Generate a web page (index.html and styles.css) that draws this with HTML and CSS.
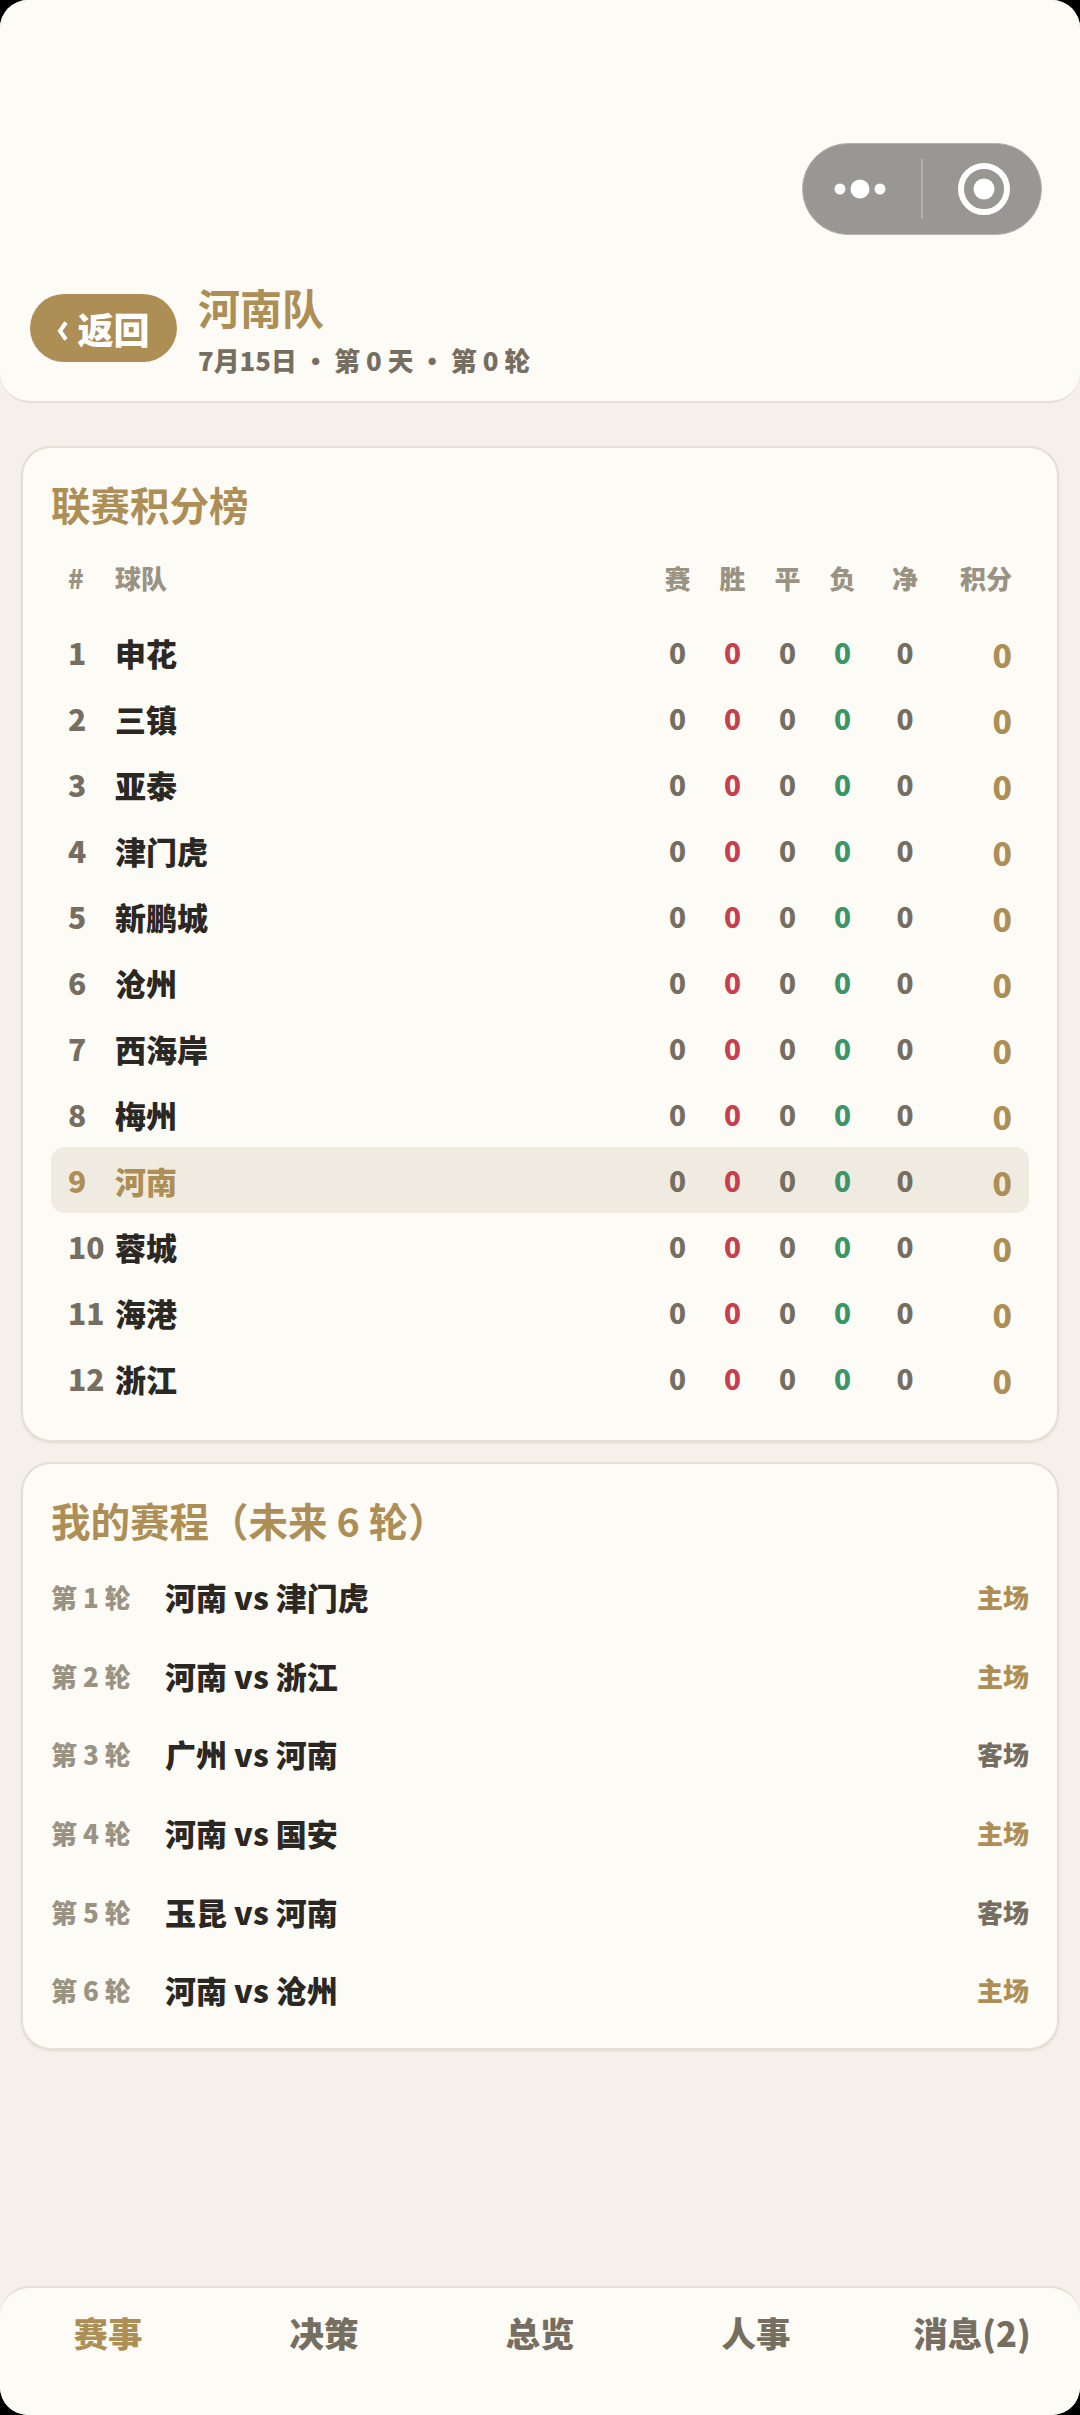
FILE: index.html
```html
<!DOCTYPE html>
<html lang="zh-CN">
<head>
    <meta charset="UTF-8">
    <title>河南队</title>
    <link rel="stylesheet" href="styles.css">
</head>
<body>
<div class="app">
    <header class="top">
        <div class="capsule">
            <div class="capsule-part left">
                <svg width="52" height="20" viewBox="0 0 52 20"><circle cx="6" cy="10" r="5.5" fill="#fff"/><circle cx="26" cy="10" r="9.5" fill="#fff"/><circle cx="46" cy="10" r="5.5" fill="#fff"/></svg>
            </div>
            <div class="capsule-line"></div>
            <div class="capsule-part right">
                <svg width="52" height="52" viewBox="0 0 52 52"><circle cx="26" cy="26" r="23" fill="none" stroke="#fff" stroke-width="6"/><circle cx="26" cy="26" r="10.5" fill="#fff"/></svg>
            </div>
        </div>
        <div class="top-row">
            <button class="back">
                <svg class="back-arrow" width="11" height="20" viewBox="0 0 11 20"><path d="M9 1.5 3 10l6 8.5" fill="none" stroke="#fff" stroke-width="4"/></svg>
                返回
            </button>
            <div>
                <h1>河南队</h1>
                <p class="sub">7月15日 ・ 第 0 天 ・ 第 0 轮</p>
            </div>
        </div>
    </header>

    <main>
        <section class="card">
            <h2>联赛积分榜</h2>
            <div class="row head">
                <span>#</span><span>球队</span><span class="c">赛</span><span class="c">胜</span><span class="c">平</span><span class="c">负</span><span class="c">净</span><span class="r">积分</span>
            </div>
            <div class="row"><span class="rank">1</span><span class="team">申花</span><span class="c">0</span><span class="c win">0</span><span class="c">0</span><span class="c lose">0</span><span class="c">0</span><span class="r pts">0</span></div>
            <div class="row"><span class="rank">2</span><span class="team">三镇</span><span class="c">0</span><span class="c win">0</span><span class="c">0</span><span class="c lose">0</span><span class="c">0</span><span class="r pts">0</span></div>
            <div class="row"><span class="rank">3</span><span class="team">亚泰</span><span class="c">0</span><span class="c win">0</span><span class="c">0</span><span class="c lose">0</span><span class="c">0</span><span class="r pts">0</span></div>
            <div class="row"><span class="rank">4</span><span class="team">津门虎</span><span class="c">0</span><span class="c win">0</span><span class="c">0</span><span class="c lose">0</span><span class="c">0</span><span class="r pts">0</span></div>
            <div class="row"><span class="rank">5</span><span class="team">新鹏城</span><span class="c">0</span><span class="c win">0</span><span class="c">0</span><span class="c lose">0</span><span class="c">0</span><span class="r pts">0</span></div>
            <div class="row"><span class="rank">6</span><span class="team">沧州</span><span class="c">0</span><span class="c win">0</span><span class="c">0</span><span class="c lose">0</span><span class="c">0</span><span class="r pts">0</span></div>
            <div class="row"><span class="rank">7</span><span class="team">西海岸</span><span class="c">0</span><span class="c win">0</span><span class="c">0</span><span class="c lose">0</span><span class="c">0</span><span class="r pts">0</span></div>
            <div class="row"><span class="rank">8</span><span class="team">梅州</span><span class="c">0</span><span class="c win">0</span><span class="c">0</span><span class="c lose">0</span><span class="c">0</span><span class="r pts">0</span></div>
            <div class="row mine"><span class="rank">9</span><span class="team">河南</span><span class="c">0</span><span class="c win">0</span><span class="c">0</span><span class="c lose">0</span><span class="c">0</span><span class="r pts">0</span></div>
            <div class="row"><span class="rank">10</span><span class="team">蓉城</span><span class="c">0</span><span class="c win">0</span><span class="c">0</span><span class="c lose">0</span><span class="c">0</span><span class="r pts">0</span></div>
            <div class="row"><span class="rank">11</span><span class="team">海港</span><span class="c">0</span><span class="c win">0</span><span class="c">0</span><span class="c lose">0</span><span class="c">0</span><span class="r pts">0</span></div>
            <div class="row"><span class="rank">12</span><span class="team">浙江</span><span class="c">0</span><span class="c win">0</span><span class="c">0</span><span class="c lose">0</span><span class="c">0</span><span class="r pts">0</span></div>
        </section>

        <section class="card card-schedule">
            <h2>我的赛程（未来 6 轮）</h2>
            <div class="game"><span class="round">第 1 轮</span><span class="match">河南 vs 津门虎</span><span class="home">主场</span></div>
            <div class="game"><span class="round">第 2 轮</span><span class="match">河南 vs 浙江</span><span class="home">主场</span></div>
            <div class="game"><span class="round">第 3 轮</span><span class="match">广州 vs 河南</span><span class="away">客场</span></div>
            <div class="game"><span class="round">第 4 轮</span><span class="match">河南 vs 国安</span><span class="home">主场</span></div>
            <div class="game"><span class="round">第 5 轮</span><span class="match">玉昆 vs 河南</span><span class="away">客场</span></div>
            <div class="game"><span class="round">第 6 轮</span><span class="match">河南 vs 沧州</span><span class="home">主场</span></div>
        </section>
    </main>

    <nav class="tabs">
        <a class="active">赛事</a>
        <a>决策</a>
        <a>总览</a>
        <a>人事</a>
        <a>消息(2)</a>
    </nav>
</div>
</body>
</html>
```

FILE: styles.css
```css
* { box-sizing: border-box; }
html, body {
    margin: 0;
    height: 100%;
    background: #000;
}
.app {
    height: 2415px;
    display: flex;
    flex-direction: column;
    position: relative;
    overflow: hidden;
    border-radius: 28px;
    background: #f5f0ea;
    font-family: "Noto Sans CJK SC", "Noto Sans", sans-serif;
    font-weight: 900;
    color: #2b2722;
}
.top {
    height: 403px;
    padding: 279px 30px 0;
    background: #fdfbf6;
    border-bottom: 2px solid #e6dfd5;
    border-radius: 0 0 30px 30px;
}
.capsule {
    position: absolute;
    left: 802px;
    top: 143px;
    width: 240px;
    height: 92px;
    display: flex;
    align-items: center;
    background: #989793;
    border: 1px solid #b4b3af;
    border-radius: 46px;
}
.capsule-part {
    flex: 1;
    display: flex;
    justify-content: center;
    align-items: center;
}
.capsule-part.left { padding-right: 4px; }
.capsule-part.right { padding-left: 4px; }
.capsule-line {
    width: 2px;
    height: 60px;
    background: #b2b1ad;
}
.top-row {
    display: flex;
    align-items: flex-start;
    gap: 21px;
}
.back {
    display: flex;
    align-items: center;
    justify-content: center;
    gap: 9px;
    width: 147px;
    height: 68px;
    margin-top: 15px;
    padding: 0;
    border: 0;
    border-radius: 34px;
    background: #ad8e55;
    color: #fff;
    font: inherit;
    font-size: 36px;
    line-height: 68px;
}
.back-arrow { margin-top: 6px; }
h1 {
    margin: 0;
    font-size: 42px;
    line-height: 56px;
    color: #ad8e55;
}
.sub {
    margin: 6px 0 0;
    font-size: 25.8px;
    line-height: 38px;
    color: #766e60;
}
main {
    flex: 1;
    padding: 43px 21px 0;
}
.card {
    height: 996px;
    padding: 28px 28px 0;
    background: #fdfbf6;
    border: 2px solid #e6dfd5;
    border-radius: 30px;
    box-shadow: 0 1px 2px rgba(120, 105, 80, 0.15);
}
.card-schedule {
    height: 588px;
    margin-top: 20px;
}
h2 {
    margin: 0;
    font-size: 39.5px;
    line-height: 56px;
    color: #ad8e55;
}
.row {
    display: grid;
    grid-template-columns: 47px 1fr 55px 55px 55px 55px 70px 72px;
    align-items: center;
    height: 66px;
    padding: 0 17px 0 17px;
    border-radius: 14px;
    font-size: 28px;
    color: #766e60;
}
.head {
    height: 62px;
    margin: 14px 0 11px;
    font-size: 26px;
    color: #9a9384;
}
.c { text-align: center; }
.r { text-align: right; }
.rank { font-size: 30px; }
.team {
    font-size: 31px;
    color: #2b2722;
}
.win { color: #c8404f; }
.lose { color: #3d9468; }
.pts {
    padding-top: 3px;
    font-size: 32px;
    color: #ad8e55;
}
.mine { background: #f0ebe1; }
.mine .rank, .mine .team { color: #ad8e55; }
.game {
    display: flex;
    align-items: center;
    height: 78.7px;
}
.card-schedule h2 { margin-bottom: 9px; }
.round {
    width: 114px;
    font-size: 26px;
    color: #9a9384;
}
.match {
    flex: 1;
    font-size: 31px;
}
.home, .away { font-size: 26px; }
.home { color: #ad8e55; }
.away { color: #766e60; }
.tabs {
    height: 129px;
    display: flex;
    padding-top: 19px;
    background: #fdfbf6;
    border-top: 2px solid #e6dfd5;
    border-radius: 30px 30px 0 0;
}
.tabs a {
    flex: 1;
    text-align: center;
    font-size: 34.5px;
    line-height: 50px;
    color: #766e60;
}
.tabs .active { color: #ad8e55; }
```
